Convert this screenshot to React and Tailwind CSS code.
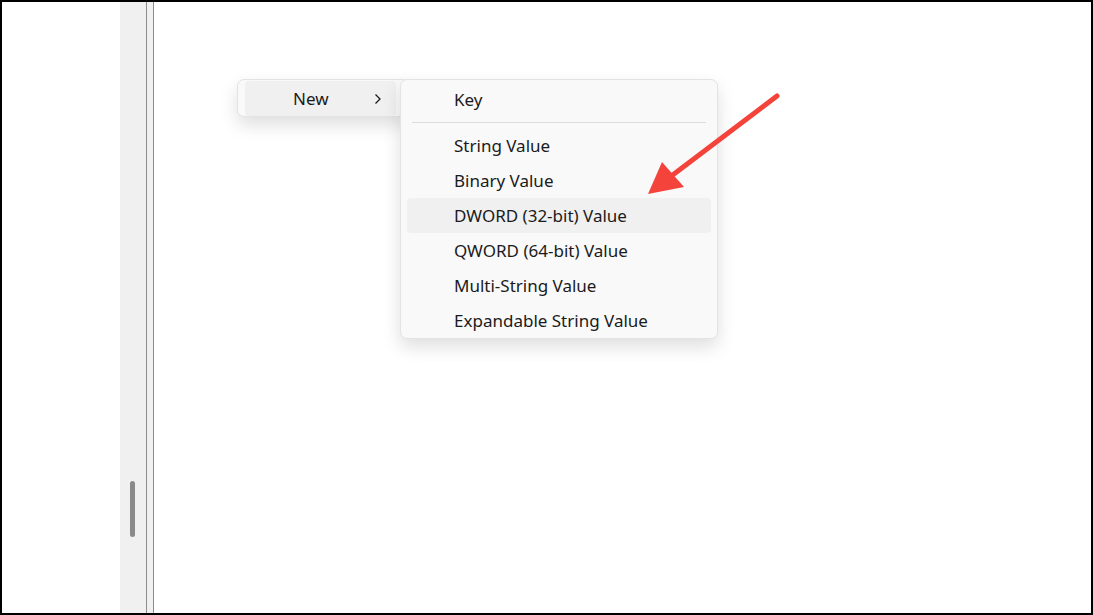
import React from "react";

const items = [
  "String Value",
  "Binary Value",
  "DWORD (32-bit) Value",
  "QWORD (64-bit) Value",
  "Multi-String Value",
  "Expandable String Value",
];

export default function App() {
  return (
    <div
      className="relative flex h-[615px] w-[1093px] overflow-hidden border-2 border-black bg-white text-[#1b1b1b]"
      style={{ fontFamily: '"Noto Sans", "Open Sans", sans-serif' }}
    >
      <div className="w-[118px] shrink-0 bg-white" />
      <div className="w-[26px] shrink-0 bg-[#f0f0f0] pl-[10px] pt-[479px]">
        <div className="h-[56px] w-[5px] rounded-full bg-[#8a8a8a]" />
      </div>
      <div className="w-px shrink-0 bg-[#8c8c8c]" />
      <div className="w-[6px] shrink-0 bg-[#f0f0f0]" />
      <div className="w-px shrink-0 bg-[#8c8c8c]" />
      <div className="relative flex-1 bg-white">
        {/* First menu */}
        <div className="absolute left-[83px] top-[77px] h-[38px] w-[172px] rounded-[7px] border border-[#e3e3e3] bg-[#f9f9f9] pl-[7px] pt-px shadow-[0_8px_18px_rgba(0,0,0,0.13)]">
          <div className="flex h-[35px] w-[151px] items-center rounded-[4px] bg-[#f0f0f0] pl-[48px] text-[17px]">
            <span className="flex-1">New</span>
            <svg width="8" height="12" viewBox="0 0 8 12" className="mr-[14px]">
              <path d="M1.5 1.5 L6 6 L1.5 10.5" fill="none" stroke="#1b1b1b" strokeWidth="1.3" />
            </svg>
          </div>
        </div>
        {/* Submenu */}
        <div className="absolute left-[246px] top-[77px] z-10 w-[318px] rounded-[7px] border border-[#e3e3e3] bg-[#f9f9f9] pt-[2px] text-[17px] shadow-[0_8px_18px_rgba(0,0,0,0.13)]">
          <div className="mx-[6px] flex h-[35px] items-center pl-[47px]">Key</div>
          <div className="flex h-[11px] items-center px-[11px]">
            <div className="h-px w-full bg-[#dcdcdc]" />
          </div>
          {items.map((t) => (
            <div
              key={t}
              className={
                t === "DWORD (32-bit) Value"
                  ? "mx-[6px] flex h-[35px] items-center rounded-[4px] bg-[#f0f0f0] pl-[47px]"
                  : "mx-[6px] flex h-[35px] items-center pl-[47px]"
              }
            >
              {t}
            </div>
          ))}
        </div>
      </div>
      {/* Arrow annotation */}
      <svg
        className="pointer-events-none absolute left-[-2px] top-[-2px] z-20"
        width="1093"
        height="615"
        viewBox="0 0 1093 615"
      >
        <line x1="777" y1="96" x2="670" y2="177" stroke="#f4433b" strokeWidth="5" strokeLinecap="round" />
        <polygon points="648,194 662,162 684,187" fill="#f4433b" />
      </svg>
    </div>
  );
}
